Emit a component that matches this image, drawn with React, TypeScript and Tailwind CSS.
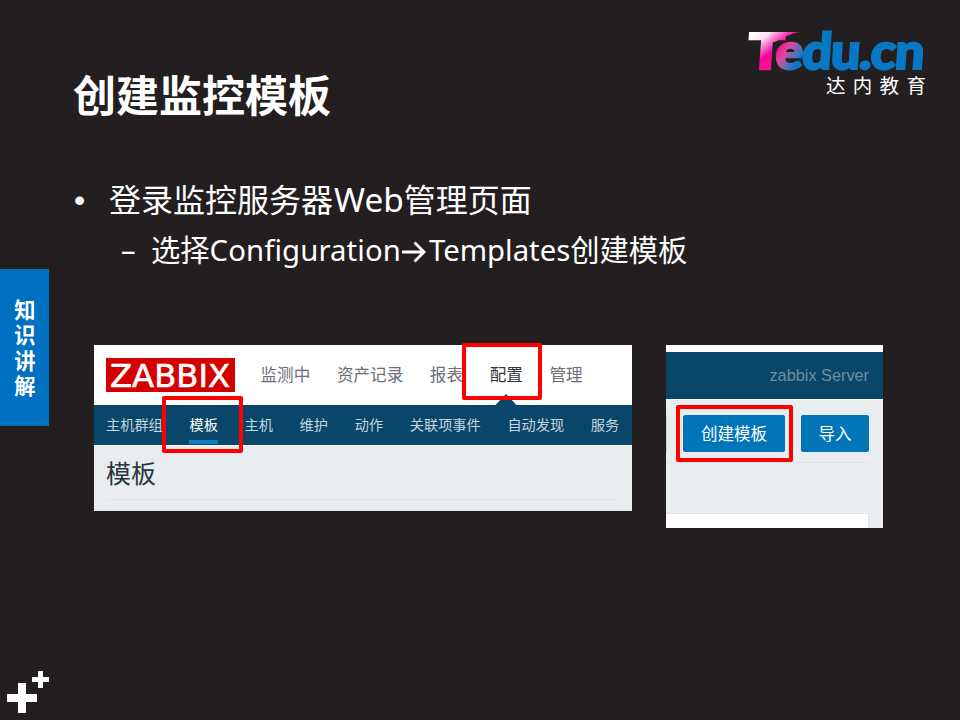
import React from "react";

const CJK = "font-['Noto_Sans','Noto_Sans_CJK_SC',sans-serif]";

function BrandLogo() {
  return (
    <svg className="block" width="190" height="76" viewBox="740 26 190 76">
      <defs>
        <linearGradient id="tee" gradientUnits="userSpaceOnUse" x1="755" y1="32" x2="774" y2="56">
          <stop offset="0" stopColor="#ffffff" />
          <stop offset="0.3" stopColor="#fde0f1" />
          <stop offset="0.85" stopColor="#f500a0" />
          <stop offset="1" stopColor="#f51096" />
        </linearGradient>
        <linearGradient id="teeText" gradientUnits="userSpaceOnUse" x1="755" y1="-38" x2="774" y2="-14">
          <stop offset="0" stopColor="#ffffff" />
          <stop offset="0.3" stopColor="#fde0f1" />
          <stop offset="0.85" stopColor="#f500a0" />
          <stop offset="1" stopColor="#f51096" />
        </linearGradient>
        <linearGradient id="word" gradientUnits="userSpaceOnUse" x1="777" y1="-18" x2="797" y2="-6">
          <stop offset="0" stopColor="#f51894" />
          <stop offset="0.3" stopColor="#d84d9c" />
          <stop offset="0.75" stopColor="#4a72bb" />
          <stop offset="1" stopColor="#0878c4" />
        </linearGradient>
      </defs>
      <g transform="translate(0 69) skewX(-4)">
        <text x="747" y="0" fontSize="49.5" textLength="36" lengthAdjust="spacingAndGlyphs" fill="url(#teeText)" stroke="url(#teeText)" strokeWidth="2.4" className="font-['Lato'] font-black">T</text>
      </g>
      <path d="M770 32H799.5Q786 35 776 41.5L770 43Z" fill="url(#tee)" />
      <g transform="translate(0 69) skewX(-4)">
        <text x="774.5" y="0" fontSize="50" letterSpacing="-1" textLength="148" lengthAdjust="spacingAndGlyphs" fill="url(#word)" stroke="url(#word)" strokeWidth="2.2" className="font-['Lato'] font-black">edu.cn</text>
      </g>
      <text x="826" y="93" fontSize="19.5" letterSpacing="7.3" fill="#fff" className="font-['Noto_Sans_CJK_SC']">达内教育</text>
    </svg>
  );
}

function Highlight({ className }: { className: string }) {
  return <div className={`absolute rounded-[2px] border-4 border-[#ff0000] ${className}`} />;
}

const mainNav = ["监测中", "资产记录", "报表", "配置", "管理"];
const subNav = ["主机群组", "模板", "主机", "维护", "动作", "关联项事件", "自动发现", "服务"];

function MenuFigure() {
  return (
    <div className="relative h-[166px] w-[538px] bg-[#e9edf0]">
      <div className="flex h-[60px] items-center bg-white pl-[12px]">
        <svg width="129" height="34" viewBox="0 0 129 34" className="shrink-0">
          <rect width="129" height="34" fill="#d40000" />
          <text x="4" y="29" fontSize="32.5" textLength="120" lengthAdjust="spacingAndGlyphs" fill="#fff" stroke="#fff" strokeWidth="0.6" className="font-['DejaVu_Sans']">ZABBIX</text>
        </svg>
        <nav className="ml-[25.5px] flex h-full items-center gap-[26.6px] text-[16.6px] whitespace-nowrap text-[#6c7075]">
          {mainNav.map((t) => (
            <span key={t} className={`relative flex h-full items-center ${t === "配置" ? "text-[#34383c]" : ""}`}>
              {t}
              {t === "配置" && (
                <svg className="absolute bottom-0 left-1/2 -translate-x-1/2" width="21" height="11" viewBox="0 0 21 11">
                  <path d="M0 11 10.5 0 21 11Z" fill="#0a466a" />
                </svg>
              )}
            </span>
          ))}
        </nav>
      </div>
      <nav className="flex h-[41px] items-center gap-[26.7px] border-b border-white bg-[#0a466a] pl-[12px] text-[14.2px] whitespace-nowrap text-[#c5d5df]">
        {subNav.map((t) => (
          <span key={t} className={`relative flex h-full items-center ${t === "模板" ? "text-white" : ""}`}>
            {t}
            {t === "模板" && <i className="absolute bottom-[1.5px] left-0 h-[4px] w-full bg-[#0d80c7]" />}
          </span>
        ))}
      </nav>
      <h2 className="mx-[12px] flex h-[54px] items-center border-b border-[#dfe4e7] pt-[2px] text-[25px] text-[#28343e]">模板</h2>
      <Highlight className="left-[368px] top-[-2px] h-[57px] w-[80px]" />
      <Highlight className="left-[68px] top-[51px] h-[57px] w-[81px]" />
    </div>
  );
}

function ButtonsFigure() {
  return (
    <div className="relative flex h-[183px] w-[217px] flex-col bg-[#e9edf0]">
      <div className="h-[7px] bg-white" />
      <div className="flex h-[48px] items-center justify-end border-b border-white bg-[#0a466a] pr-[14px] font-['Liberation_Sans'] text-[16.3px] text-[#6d8ea3]">
        zabbix Server
      </div>
      <div className="mr-[14px] flex h-[63px] items-center gap-[16px] border-b border-[#dce2e5] pt-[5px] text-[16.5px] text-white">
        <div className="-mr-px h-[37px] w-[1px] bg-[#c5cbd0]" />
        <div className="ml-[1px] flex h-[37px] w-[102px] items-center justify-center rounded-[2px] bg-[#0275b8] pt-[2px]">创建模板</div>
        <div className="flex h-[37px] w-[68px] items-center justify-center rounded-[2px] bg-[#0275b8] pt-[2px]">导入</div>
      </div>
      <div className="mt-auto mr-[14px] h-[15px] border-t border-r border-[#dfe4e7] bg-white" />
      <Highlight className="left-[10px] top-[60px] h-[57px] w-[117px]" />
    </div>
  );
}

export default function App() {
  return (
    <div className={`flex h-[720px] w-[960px] overflow-hidden bg-[#231f20] text-white ${CJK}`}>
      <aside className="flex w-[49px] shrink-0 flex-col justify-between pt-[269px]">
        <div className="flex h-[157px] items-center justify-center bg-[#0070c0] pt-[2px] pr-[2px] text-[21.3px] leading-[30px] font-bold tracking-[4.2px] [writing-mode:vertical-rl]">
          <span className="mt-[3px]">知识讲解</span>
        </div>
        <svg width="49" height="49" viewBox="0 671 49 49" fill="#fff">
          <path d="M18 683h8v30h-8zM7 694h30v8H7zM38 671h5v17h-5zM32 677h17v5H32z" />
        </svg>
      </aside>
      <main className="flex flex-1 flex-col">
        <header className="flex h-[160px] justify-between pl-[24px] pr-[30px] pt-[26px]">
          <h1 className="mt-[38px] text-[43px] leading-[64px] font-bold whitespace-nowrap">创建监控模板</h1>
          <BrandLogo />
        </header>
        <div className="h-[185px] pt-[16px] whitespace-nowrap">
          <p className="flex h-[48px] items-center pl-[25px] text-[32px]">
            <span className="w-[35px] font-['Liberation_Sans']">•</span>
            <span>
              登录监控服务器<span className="ml-px text-[33.4px] leading-none">Web</span>管理页面
            </span>
          </p>
          <p className="mt-[5px] flex h-[44px] items-center pl-[72px] text-[29.3px]">
            <span className="w-[30px]">–</span>
            <span>
              选择<span className="tracking-[0.1px]">Configuration</span>
            </span>
            <svg className="mr-[2px] ml-[1px] mt-[1px]" width="25" height="24" viewBox="0 0 25 24" fill="none" stroke="#fff" strokeWidth="2.8">
              <path d="M0 12H22M12.5 2.5L22 12L12.5 21.5" />
            </svg>
            <span>Templates创建模板</span>
          </p>
        </div>
        <section className="flex items-start gap-[34px] pl-[45px]">
          <MenuFigure />
          <ButtonsFigure />
        </section>
      </main>
    </div>
  );
}
